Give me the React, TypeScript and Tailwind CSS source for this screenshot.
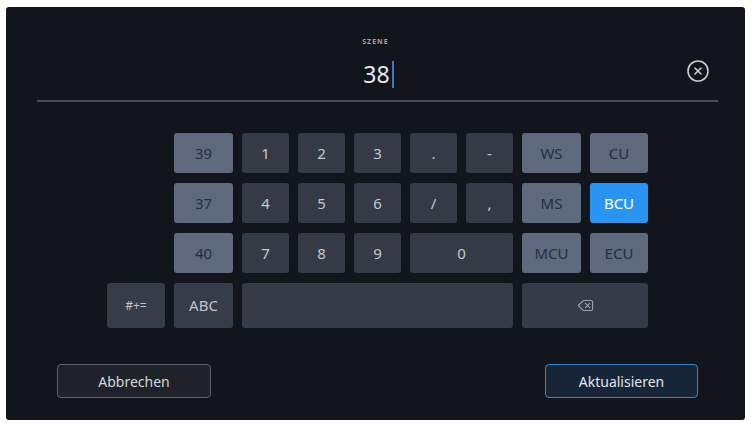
import { CircleX, Delete } from "lucide-react";

type Key = { label: string; tone: "light" | "dark" | "blue"; span?: string };

const rows: Key[][] = [
  [
    { label: "39", tone: "light" },
    { label: "1", tone: "dark" },
    { label: "2", tone: "dark" },
    { label: "3", tone: "dark" },
    { label: ".", tone: "dark" },
    { label: "-", tone: "dark" },
    { label: "WS", tone: "light" },
    { label: "CU", tone: "light" },
  ],
  [
    { label: "37", tone: "light" },
    { label: "4", tone: "dark" },
    { label: "5", tone: "dark" },
    { label: "6", tone: "dark" },
    { label: "/", tone: "dark" },
    { label: ",", tone: "dark" },
    { label: "MS", tone: "light" },
    { label: "BCU", tone: "blue" },
  ],
  [
    { label: "40", tone: "light" },
    { label: "7", tone: "dark" },
    { label: "8", tone: "dark" },
    { label: "9", tone: "dark" },
    { label: "0", tone: "dark", span: "col-span-2" },
    { label: "MCU", tone: "light" },
    { label: "ECU", tone: "light" },
  ],
];

const toneClass = {
  light: "bg-[#5e697e] text-[#262e3e]",
  dark: "bg-[#363a46] text-[#c4c8d0]",
  blue: "bg-[#2a95f0] text-white",
};

export default function App() {
  return (
    <div
      className="h-[423px] w-[751px] bg-white px-[6px] pb-[3px] pt-[7px]"
      style={{ fontFamily: '"Noto Sans", "Open Sans", sans-serif' }}
    >
      <div className="flex h-full flex-col rounded-[3px] bg-[#13151c]">
        {/* entry field */}
        <div className="relative flex flex-col items-center pt-[31px]">
          <span className="text-[7px] font-bold leading-[8px] tracking-[0.15em] text-[#9aa0aa]">
            SZENE
          </span>
          <div className="mt-[14px] ml-[6px] flex items-center">
            <span className="text-[23px] leading-[28px] text-[#e6e8ec]">38</span>
            <span className="ml-[2px] h-[27px] w-[2px] bg-[#3a78c8]" />
          </div>
          <CircleX
            className="absolute right-[35px] top-[52px] h-[24px] w-[24px] text-[#c9ccd2]"
            strokeWidth={1.6}
          />
        </div>
        <div className="ml-[31px] mr-[27px] mt-[12px] h-[2px] bg-[#474c57]" />

        {/* keypad */}
        <div className="ml-[101px] mt-[31px] grid grid-cols-[58px_59px_47px_47px_47px_47px_47px_59px_58px] grid-rows-[40px_40px_40px_45px] gap-x-[9px] gap-y-[10px] text-[15px]">
          {rows.map((row, i) => (
            <div key={i} className="contents">
              <div />
              {row.map((k) => (
                <div
                  key={k.label}
                  className={`flex items-center justify-center rounded-[3px] ${toneClass[k.tone]} ${k.span ?? ""}`}
                >
                  {k.label}
                </div>
              ))}
            </div>
          ))}
          <div className="flex items-center justify-center rounded-[3px] bg-[#373c49] text-[12px] text-[#bfc3cc]">
            #+=
          </div>
          <div className="flex items-center justify-center rounded-[3px] bg-[#373c49] text-[#bfc3cc]">
            ABC
          </div>
          <div className="col-span-5 rounded-[3px] bg-[#363b47]" />
          <div className="col-span-2 flex items-center justify-center rounded-[3px] bg-[#363b47]">
            <Delete className="h-[17px] w-[17px] text-[#9ca2ac]" strokeWidth={1.6} />
          </div>
        </div>

        {/* actions */}
        <div className="ml-[51px] mr-[47px] mt-[36px] flex justify-between text-[14px]">
          <button className="h-[34px] w-[154px] rounded-[4px] border border-[#5b606b] bg-[#1f222a] text-[#d4d7dc]">
            Abbrechen
          </button>
          <button className="h-[34px] w-[153px] rounded-[4px] border border-[#3b84cf] bg-[#172538] text-[#e2e6ec]">
            Aktualisieren
          </button>
        </div>
      </div>
    </div>
  );
}
